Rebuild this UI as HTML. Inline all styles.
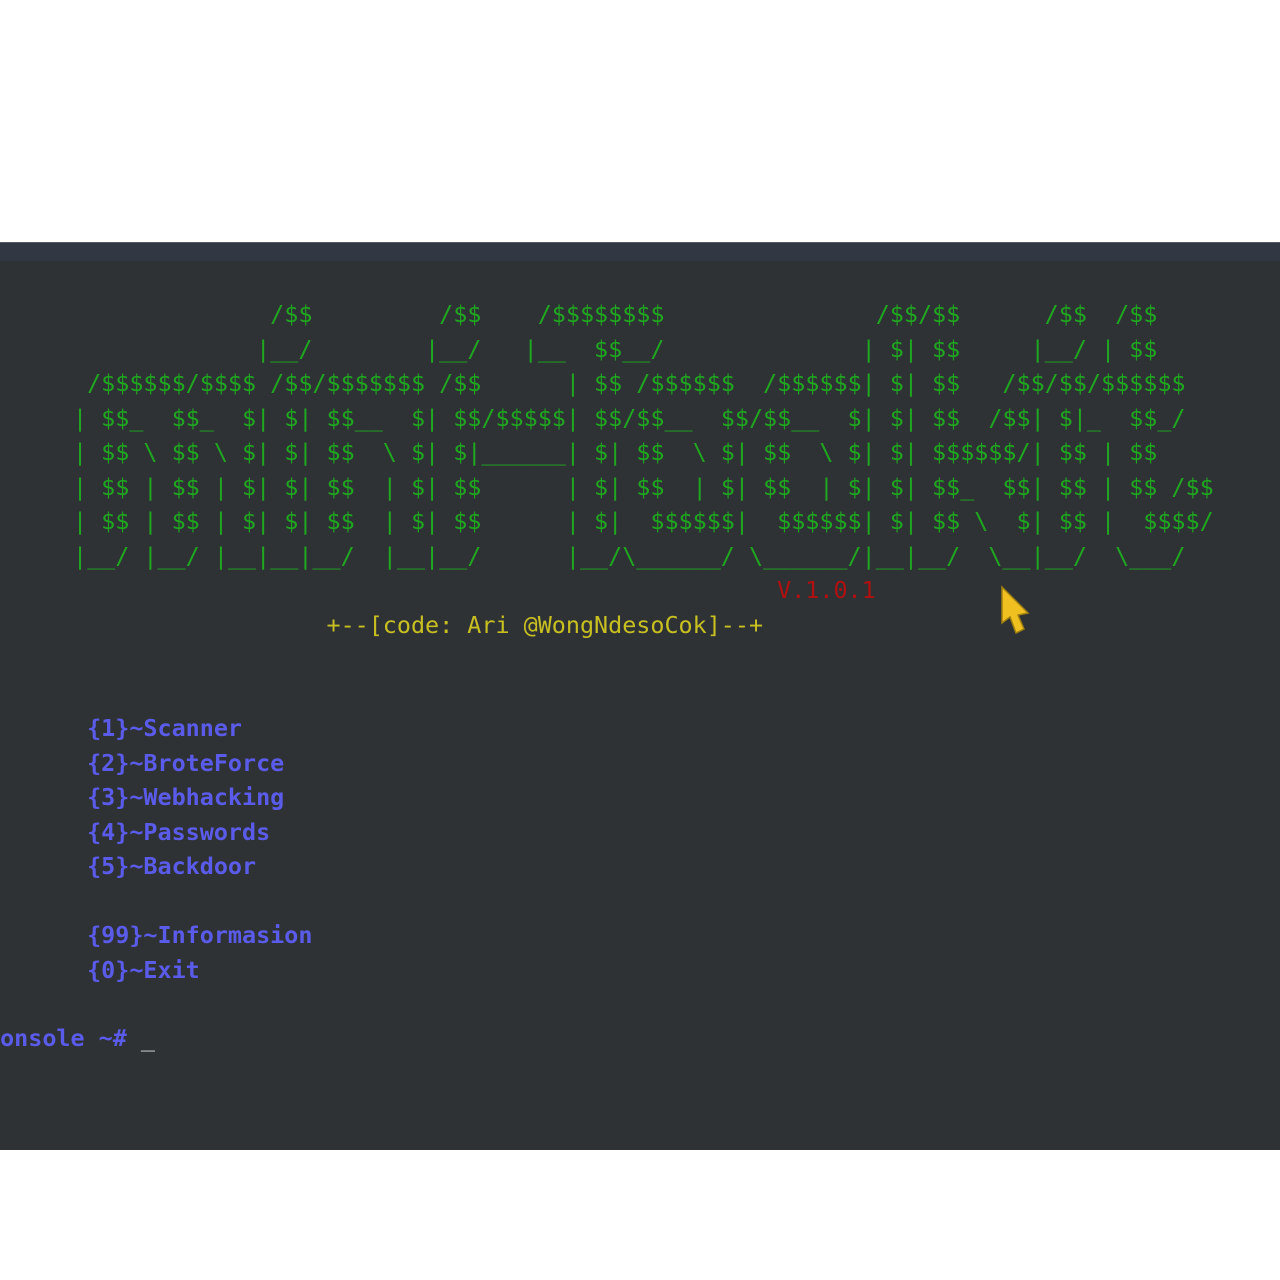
<!DOCTYPE html>
<html><head><meta charset="utf-8"><style>
html,body{margin:0;padding:0;background:#fff;width:1280px;height:1280px;overflow:hidden;position:relative}
#term{position:absolute;left:0;top:242px;width:1280px;height:908px;background:#2e3235;overflow:hidden}
#bar{position:absolute;left:0;top:0;width:1280px;height:18px;background:#323744;border-top:1px solid #555a66}
pre{position:absolute;margin:0;font-family:"DejaVu Sans Mono","Liberation Mono",monospace;font-size:23.4px;line-height:34.5px;white-space:pre}
#art{left:73px;top:55px;color:#1fa81f}
.r{color:#b01010}.y{color:#c8c020}.b{color:#5b5bea;font-weight:bold}.w{color:#ddd}
</style></head><body>
<div id="term"><div id="bar"></div>
<pre id="art">              /$$         /$$    /$$$$$$$$               /$$/$$      /$$  /$$
             |__/        |__/   |__  $$__/              | $| $$     |__/ | $$
 /$$$$$$/$$$$ /$$/$$$$$$$ /$$      | $$ /$$$$$$  /$$$$$$| $| $$   /$$/$$/$$$$$$
| $$_  $$_  $| $| $$__  $| $$/$$$$$| $$/$$__  $$/$$__  $| $| $$  /$$| $|_  $$_/
| $$ \ $$ \ $| $| $$  \ $| $|______| $| $$  \ $| $$  \ $| $| $$$$$$/| $$ | $$
| $$ | $$ | $| $| $$  | $| $$      | $| $$  | $| $$  | $| $| $$_  $$| $$ | $$ /$$
| $$ | $$ | $| $| $$  | $| $$      | $|  $$$$$$|  $$$$$$| $| $$ \  $| $$ |  $$$$/
|__/ |__/ |__|__|__/  |__|__/      |__/\______/ \______/|__|__/  \__|__/  \___/
<span class="r">                                                  V.1.0.1</span>
<span class="y">                  +--[code: Ari @WongNdesoCok]--+</span>


<span class="b"> {1}~Scanner
 {2}~BroteForce
 {3}~Webhacking
 {4}~Passwords
 {5}~Backdoor

 {99}~Informasion
 {0}~Exit</span>

</pre>
<pre style="left:-14px;top:779px"><span class="b">console ~#</span> <span class="w">_</span></pre>
<svg style="position:absolute;left:998px;top:343px" width="34" height="52" viewBox="0 0 34 52"><path d="M4 2 L4 38 L12 32 L18 48 L26 44 L20 30 L30 28 Z" fill="#f0c020" stroke="#a08010" stroke-width="1.5"/></svg>
</div>
</body></html>
